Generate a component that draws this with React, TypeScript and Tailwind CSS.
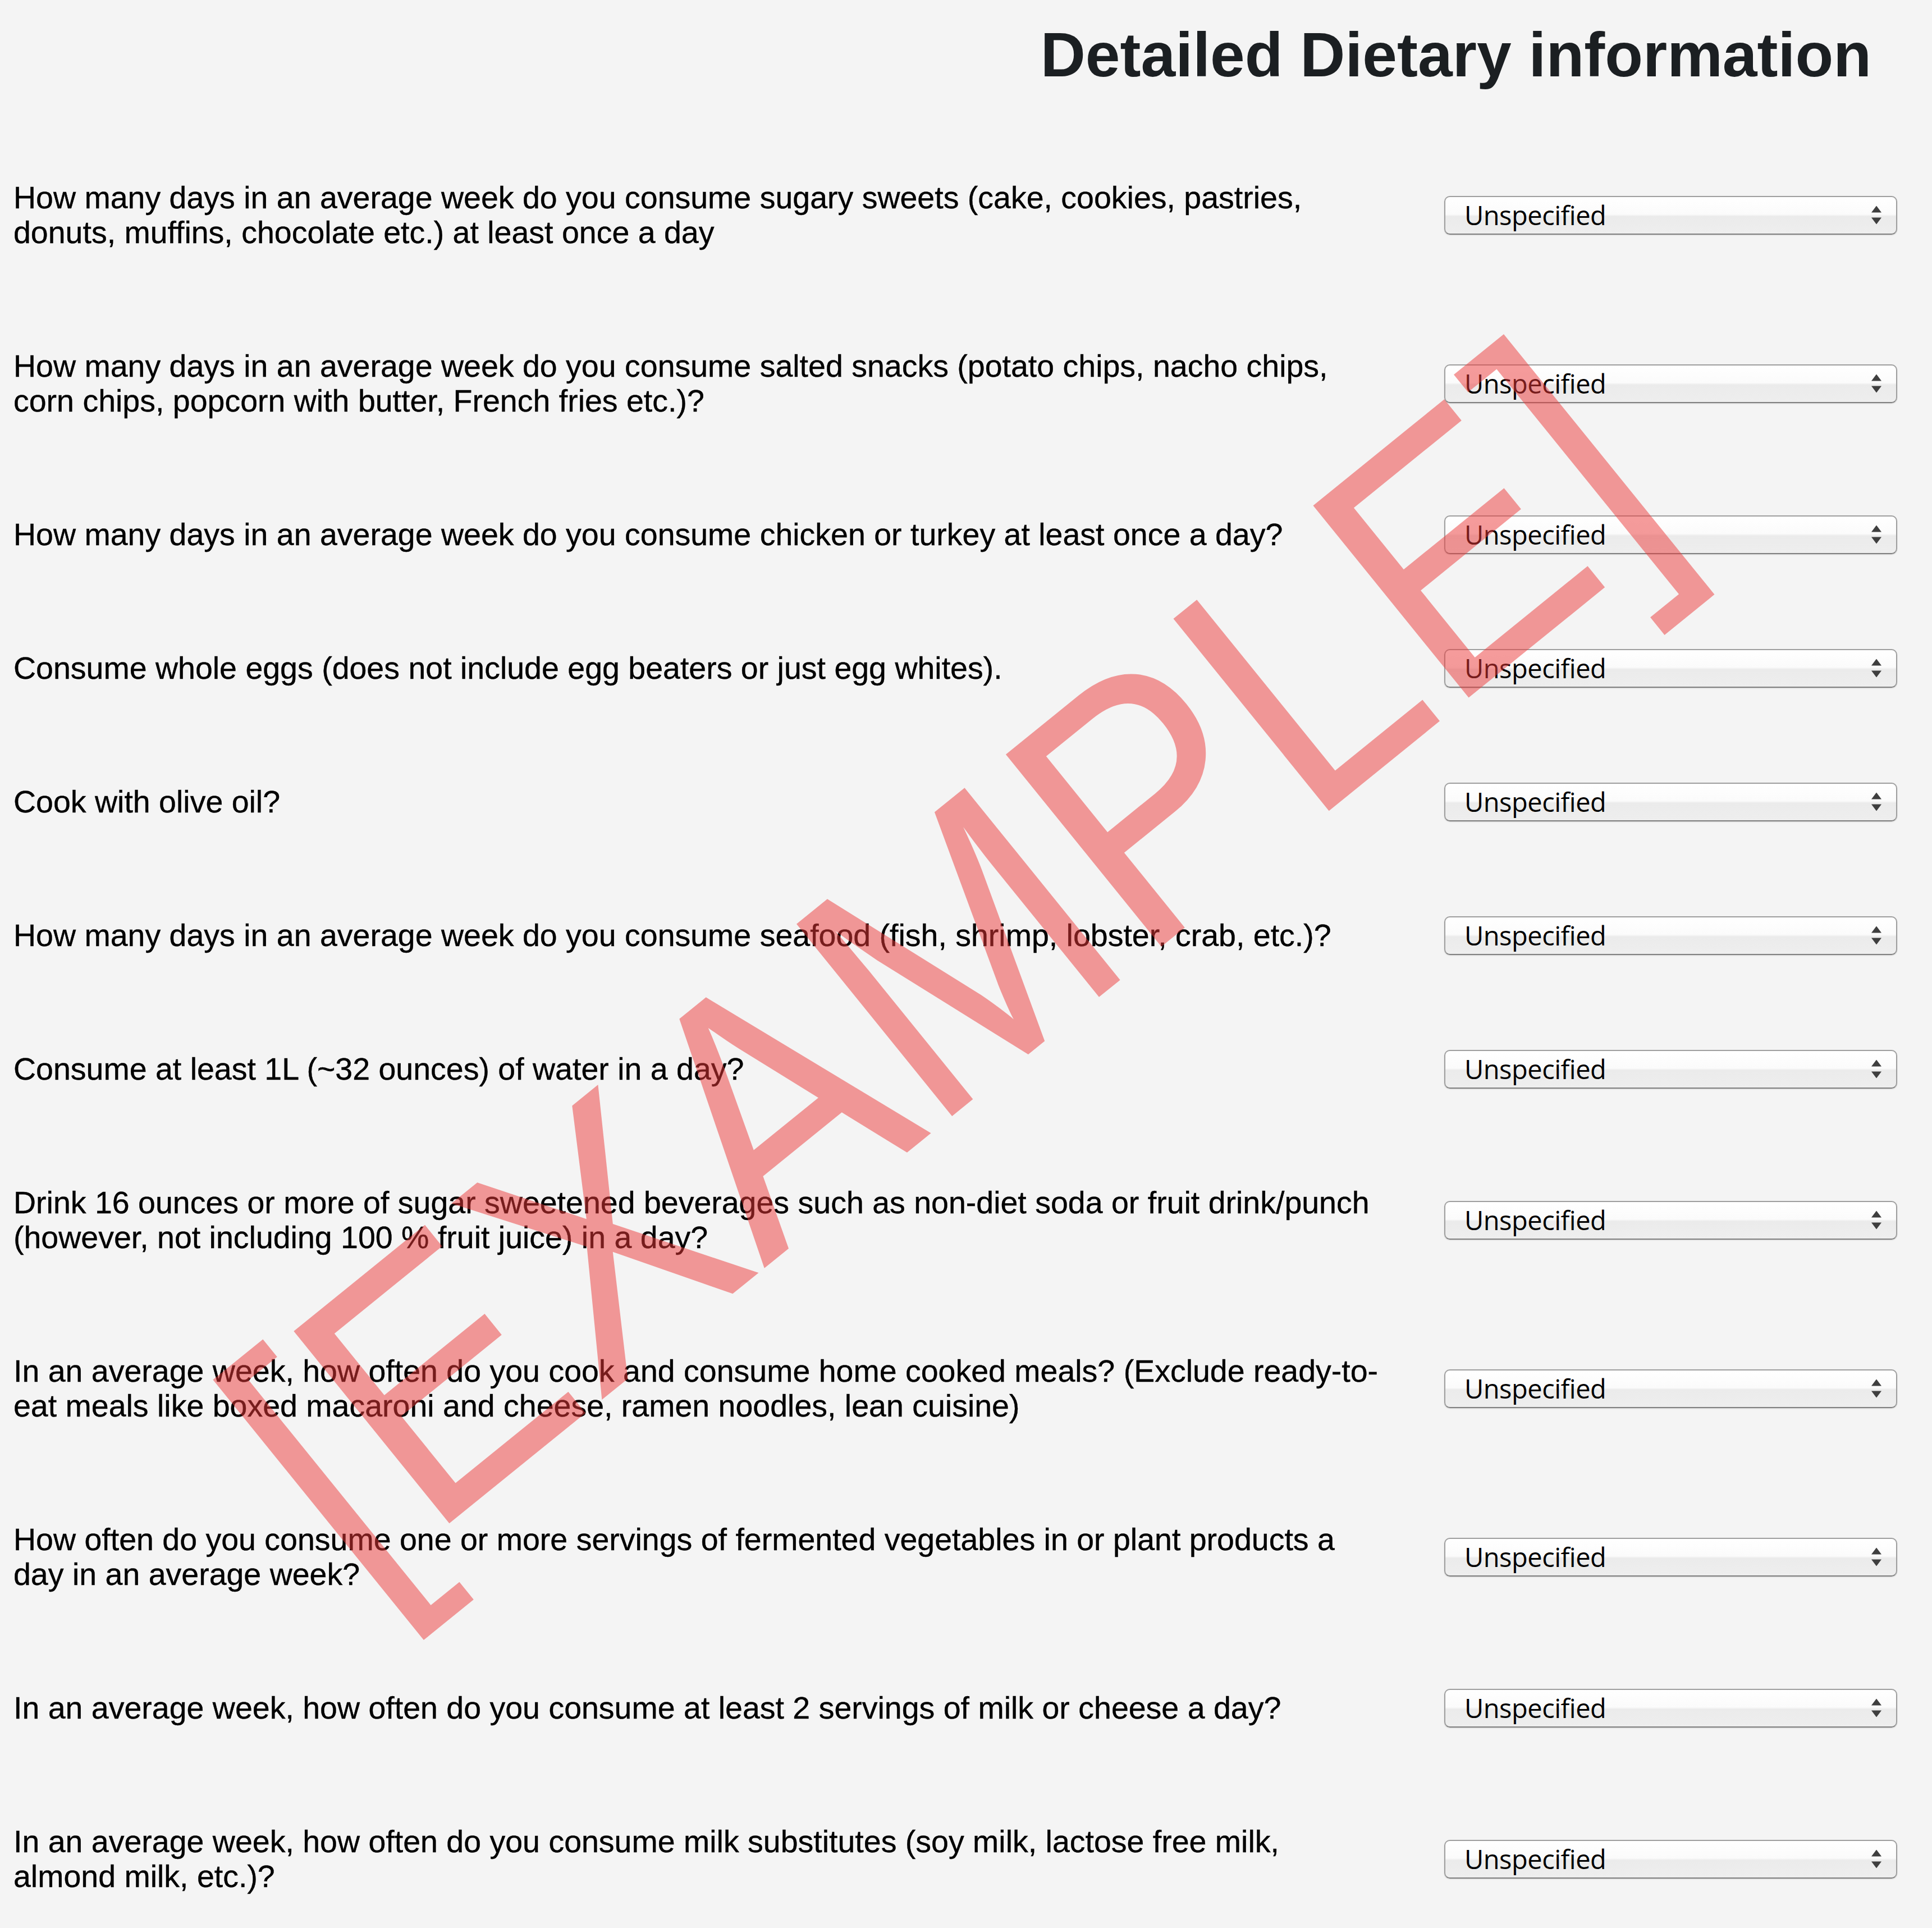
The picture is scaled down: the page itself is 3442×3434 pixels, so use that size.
import React from "react";

const questions: string[] = [
  "How many days in an average week do you consume sugary sweets (cake, cookies, pastries, donuts, muffins, chocolate etc.) at least once a day",
  "How many days in an average week do you consume salted snacks (potato chips, nacho chips, corn chips, popcorn with butter, French fries etc.)?",
  "How many days in an average week do you consume chicken or turkey at least once a day?",
  "Consume whole eggs (does not include egg beaters or just egg whites).",
  "Cook with olive oil?",
  "How many days in an average week do you consume seafood (fish, shrimp, lobster, crab, etc.)?",
  "Consume at least 1L (~32 ounces) of water in a day?",
  "Drink 16 ounces or more of sugar sweetened beverages such as non-diet soda or fruit drink/punch (however, not including 100 % fruit juice) in a day?",
  "In an average week, how often do you cook and consume home cooked meals? (Exclude ready-to-eat meals like boxed macaroni and cheese, ramen noodles, lean cuisine)",
  "How often do you consume one or more servings of fermented vegetables in or plant products a day in an average week?",
  "In an average week, how often do you consume at least 2 servings of milk or cheese a day?",
  "In an average week, how often do you consume milk substitutes (soy milk, lactose free milk, almond milk, etc.)?",
];

function SelectBox() {
  return (
    <div className="relative flex h-[69px] w-[807px] shrink-0 items-center rounded-[10px] border-2 border-[#9e9e9e] border-b-[#808080] bg-[linear-gradient(to_bottom,#ffffff_0%,#fbfbfb_47%,#ebebeb_53%,#eeeeee_100%)] pl-[34px] shadow-[0_1px_2px_rgba(0,0,0,0.15)]">
      <span className="font-['Open_Sans',sans-serif] text-[47px] font-medium leading-none tracking-[-0.5px] text-black">
        Unspecified
      </span>
      <svg
        className="absolute right-[26px] top-1/2 -translate-y-1/2"
        width="18"
        height="33"
        viewBox="0 0 18 33"
      >
        <path d="M9 0 L18 12 L0 12 Z" fill="#3f3f3f" />
        <path d="M0 21 L18 21 L9 33 Z" fill="#3f3f3f" />
      </svg>
    </div>
  );
}

export default function App() {
  return (
    <div className="relative min-h-screen w-full overflow-hidden bg-[#f4f4f4] font-['Liberation_Sans',Arial,sans-serif]">
      <h1 className="h-[233px] pt-[43px] pr-[108px] text-right text-[111px] font-bold leading-[111px] text-[#1b1f22]">
        Detailed Dietary information
      </h1>
      {questions.map((q, i) => (
        <div key={i} className="flex items-center justify-between pl-[24px] pr-[62px]">
          <p className="w-[2439px] py-[88px] text-[55.5px] leading-[62px] text-black [-webkit-text-stroke:0.4px_#000]">
            {q}
          </p>
          <SelectBox />
        </div>
      ))}
      {/* watermark stamped over the form */}
      <div className="pointer-events-none absolute inset-0 overflow-hidden">
        <span className="absolute left-[1682px] top-[1715px] whitespace-nowrap text-[640px] leading-none text-[rgba(236,56,56,0.5)] [transform:translate(-50%,-50%)_rotate(-39deg)_scaleX(0.9)]">
          [EXAMPLE]
        </span>
      </div>
    </div>
  );
}
